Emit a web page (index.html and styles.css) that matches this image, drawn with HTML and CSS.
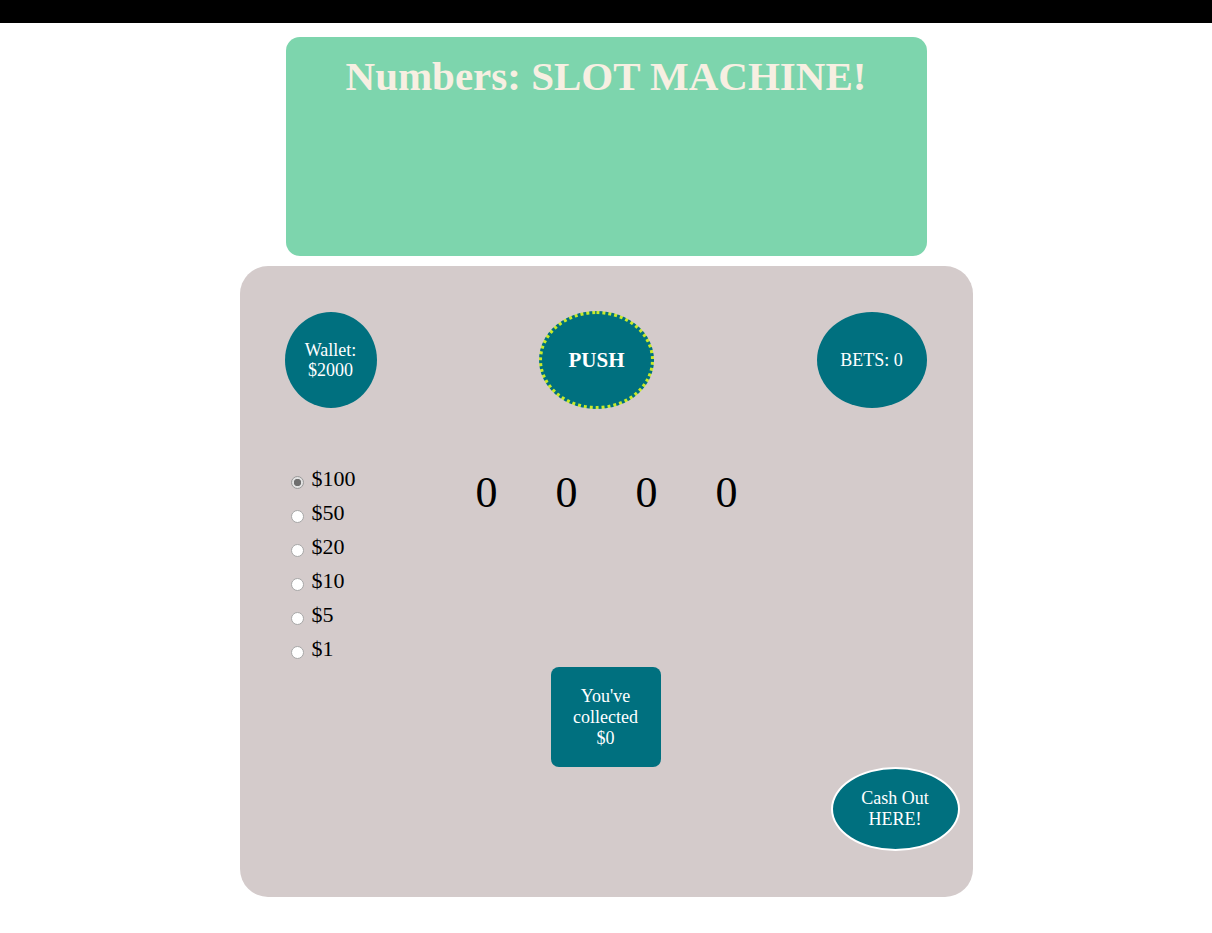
FILE: index.html
```html
<!DOCTYPE html>
<html lang="en">
<head>
<meta charset="utf-8">
<title>Numbers: SLOT MACHINE!</title>
<link rel="stylesheet" href="styles.css">
</head>
<body>
<div class="topbar"></div>
<header class="header">
  <h1 class="title">Numbers: SLOT MACHINE!</h1>
</header>
<main class="panel">
  <div class="top-row">
    <div class="wallet">Wallet:<br>$2000</div>
    <button class="push">PUSH</button>
    <div class="bets">BETS: 0</div>
  </div>
  <div class="controls">
    <div class="options">
      <label class="opt"><input type="radio" name="bet" value="100" checked><span>$100</span></label>
      <label class="opt"><input type="radio" name="bet" value="50"><span>$50</span></label>
      <label class="opt"><input type="radio" name="bet" value="20"><span>$20</span></label>
      <label class="opt"><input type="radio" name="bet" value="10"><span>$10</span></label>
      <label class="opt"><input type="radio" name="bet" value="5"><span>$5</span></label>
      <label class="opt"><input type="radio" name="bet" value="1"><span>$1</span></label>
    </div>
    <div class="reels">
      <span class="reel">0</span>
      <span class="reel">0</span>
      <span class="reel">0</span>
      <span class="reel">0</span>
    </div>
  </div>
  <div class="collected">You've<br>collected<br>$0</div>
  <button class="cashout">Cash Out<br>HERE!</button>
</main>
</body>
</html>
```

FILE: styles.css
```css
html, body {
  margin: 0;
  padding: 0;
  background: #ffffff;
  font-family: "Liberation Serif", "Times New Roman", serif;
}

.topbar {
  height: 23px;
  background: #000000;
}

.header {
  width: 641px;
  height: 219px;
  box-sizing: border-box;
  margin: 14px auto 10px;
  padding-top: 16px;
  background: #7dd5ad;
  border-radius: 14px;
}

.title {
  margin: 0;
  text-align: center;
  font-size: 41px;
  line-height: 47px;
  font-weight: bold;
  color: #f7efe2;
}

.panel {
  width: 733px;
  height: 631px;
  box-sizing: border-box;
  margin: 0 auto;
  padding: 45px 46px 46px 45px;
  background: #d4cbcb;
  border-radius: 28px;
  display: flex;
  flex-direction: column;
}

.top-row {
  display: flex;
  justify-content: space-between;
  align-items: flex-start;
  height: 98px;
}

.wallet,
.bets,
.push,
.collected,
.cashout {
  display: flex;
  align-items: center;
  justify-content: center;
  text-align: center;
  color: #ffffff;
  background: #00707f;
  font-family: "Liberation Serif", "Times New Roman", serif;
  font-size: 18px;
  line-height: 20px;
  box-sizing: border-box;
}

.wallet {
  width: 92px;
  height: 96px;
  margin-top: 1px;
  border-radius: 50%;
}

.push {
  width: 115px;
  height: 98px;
  border-radius: 50%;
  border: 3px dotted #c8ea2a;
  font-size: 21px;
  font-weight: bold;
  padding: 0;
}

.bets {
  width: 110px;
  height: 96px;
  margin-top: 1px;
  border-radius: 50%;
}

.controls {
  display: flex;
  align-items: flex-start;
  margin-top: 53px;
}

.options {
  width: 162px;
  display: flex;
  flex-direction: column;
}

.opt {
  display: block;
  height: 34px;
  line-height: 34px;
  font-size: 22px;
  color: #000000;
}

.opt input {
  -webkit-appearance: none;
  appearance: none;
  display: inline-block;
  width: 13px;
  height: 13px;
  margin: 0 8px 0 6px;
  vertical-align: -3px;
  box-sizing: border-box;
  border: 1px solid #a7a7a7;
  border-radius: 50%;
  background: #ffffff;
}

.opt input:checked {
  border-color: #9a9a9a;
  background: radial-gradient(circle, #6f6f6f 0 3.4px, #e2e2e2 4px);
}

.reels {
  display: flex;
  margin-top: 6px;
}

.reel {
  width: 80px;
  text-align: center;
  font-size: 44px;
  line-height: 50px;
  color: #000000;
}

.collected {
  width: 110px;
  height: 100px;
  margin: 1px auto 0;
  border-radius: 8px;
  line-height: 21px;
}

.cashout {
  align-self: flex-end;
  width: 129px;
  height: 84px;
  margin-right: -33px;
  border: 2px solid #ffffff;
  border-radius: 50%;
  line-height: 21px;
  padding: 0;
}
```
